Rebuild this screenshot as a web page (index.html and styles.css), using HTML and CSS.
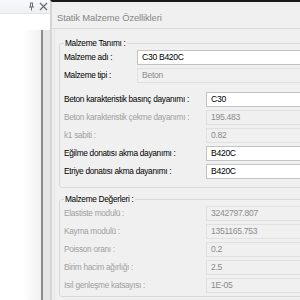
FILE: index.html
```html
<!DOCTYPE html>
<html>
<head>
<meta charset="utf-8">
<link rel="stylesheet" href="styles.css">
</head>
<body>
<div class="side">
  <div class="side-head">
    <svg class="pin" width="9" height="9" viewBox="0 0 9 9"><path d="M3 1h3M3.5 1v4M5.5 1v4M2 5h5M4.5 5v3.5" stroke="#6d6d6d" stroke-width="1" fill="none"/></svg>
    <svg class="close" width="9" height="9" viewBox="0 0 9 9"><path d="M1 1L8 8M8 1L1 8" stroke="#6d6d6d" stroke-width="1.3"/></svg>
  </div>
  <div class="side-gap"></div>
  <div class="side-body">
    <div class="side-white"></div>
    <div class="side-bar"></div>
  </div>
</div>
<div class="dialog">
  <div class="titlebar">Statik Malzeme Özellikleri</div>
  <div class="content">
    <fieldset class="group g1">
      <legend>Malzeme Tanımı :</legend>
      <div class="row r1"><span class="lbl">Malzeme adı :</span><span class="fld on w1">C30 B420C</span></div>
      <div class="row r1"><span class="lbl">Malzeme tipi :</span><span class="fld off w1">Beton</span></div>
      <div class="spacer"></div>
      <div class="row r2"><span class="lbl">Beton karakteristik basınç dayanımı :</span><span class="fld on">C30</span></div>
      <div class="row r2"><span class="lbl dim">Beton karakteristik çekme dayanımı :</span><span class="fld off">195.483</span></div>
      <div class="row r2"><span class="lbl dim">k1 sabiti :</span><span class="fld off">0.82</span></div>
      <div class="row r2"><span class="lbl">Eğilme donatısı akma dayanımı :</span><span class="fld on">B420C</span></div>
      <div class="row r2"><span class="lbl">Etriye donatısı akma dayanımı :</span><span class="fld on">B420C</span></div>
    </fieldset>
    <fieldset class="group g2">
      <legend>Malzeme Değerleri :</legend>
      <div class="row r2"><span class="lbl dim">Elastiste modulü :</span><span class="fld off">3242797.807</span></div>
      <div class="row r2"><span class="lbl dim">Kayma modulü :</span><span class="fld off">1351165.753</span></div>
      <div class="row r2"><span class="lbl dim">Poisson oranı :</span><span class="fld off">0.2</span></div>
      <div class="row r2"><span class="lbl dim">Birim hacim ağırlığı :</span><span class="fld off">2.5</span></div>
      <div class="row r2"><span class="lbl dim">Isıl genleşme katsayısı :</span><span class="fld off">1E-05</span></div>
    </fieldset>
  </div>
</div>
</body>
</html>
```
FILE: styles.css
```css
html, body {
  margin: 0;
  padding: 0;
}
body {
  width: 300px;
  height: 300px;
  overflow: hidden;
  display: flex;
  font-family: "Liberation Sans", Arial, sans-serif;
  font-size: 8.3px;
  letter-spacing: -0.3px;
  background: #fff;
}
.side {
  width: 50px;
  flex: none;
  display: flex;
  flex-direction: column;
  background: #fff;
}
.side-head {
  height: 14px;
  background: linear-gradient(#f7f8fa, #eef0f3);
  border-bottom: 1px solid #e2e4e8;
  display: flex;
  align-items: center;
  justify-content: flex-end;
  gap: 3px;
  padding-right: 2px;
  box-sizing: border-box;
}
.side-gap {
  height: 16px;
}
.side-body {
  flex: 1;
  display: flex;
}
.side-white {
  flex: 1;
  background: linear-gradient(90deg, #fff 0%, #fff 55%, #f1f1f1 100%);
}
.side-bar {
  width: 7px;
  border-left: 2px solid #8c8c8c;
  background: #e6e6e6;
}
.dialog {
  flex: 1;
  display: flex;
  flex-direction: column;
  border-left: 2px solid #d4d4d4;
  border-top: 2px solid #1a1a1a;
  background: #f0f0f0;
}
.titlebar {
  height: 27px;
  box-sizing: border-box;
  padding: 10px 0 0 5px;
  font-size: 9.4px;
  letter-spacing: -0.1px;
  color: #858585;
  border-bottom: 1px solid #d9d9d9;
  white-space: nowrap;
}
.content {
  flex: 1;
  border-left: 1px solid #e4e4e4;
  margin-left: 2px;
  padding: 9px 0 0 4px;
  display: flex;
  flex-direction: column;
  gap: 6px;
}
.group {
  margin: 0 -10px 0 0;
  padding: 0 0 7px 4px;
  border: 1px solid #d8d8d8;
  border-radius: 3px;
}
.group legend {
  padding: 0 1px;
  margin-left: 0;
  color: #000;
  line-height: 10px;
}
.row {
  display: flex;
  align-items: center;
  height: 18px;
}
.lbl {
  color: #000;
  white-space: nowrap;
}
.lbl.dim {
  color: #a0a0a0;
}
.r1 .lbl { width: 73px; flex: none; }
.r2 .lbl { width: 142px; flex: none; }
.fld {
  flex: 1;
  height: 15px;
  box-sizing: border-box;
  padding: 0 4px;
  line-height: 13px;
  white-space: nowrap;
  font-size: 8.6px;
}
.fld.on {
  background: #fff;
  border: 1px solid #c3c3c3;
  color: #000;
}
.fld.off {
  background: #f0f0f0;
  border: 1px solid #e0e0e0;
  color: #8c8c8c;
}
.spacer {
  height: 6px;
}
.g2 {
  padding-bottom: 2px;
}
```
